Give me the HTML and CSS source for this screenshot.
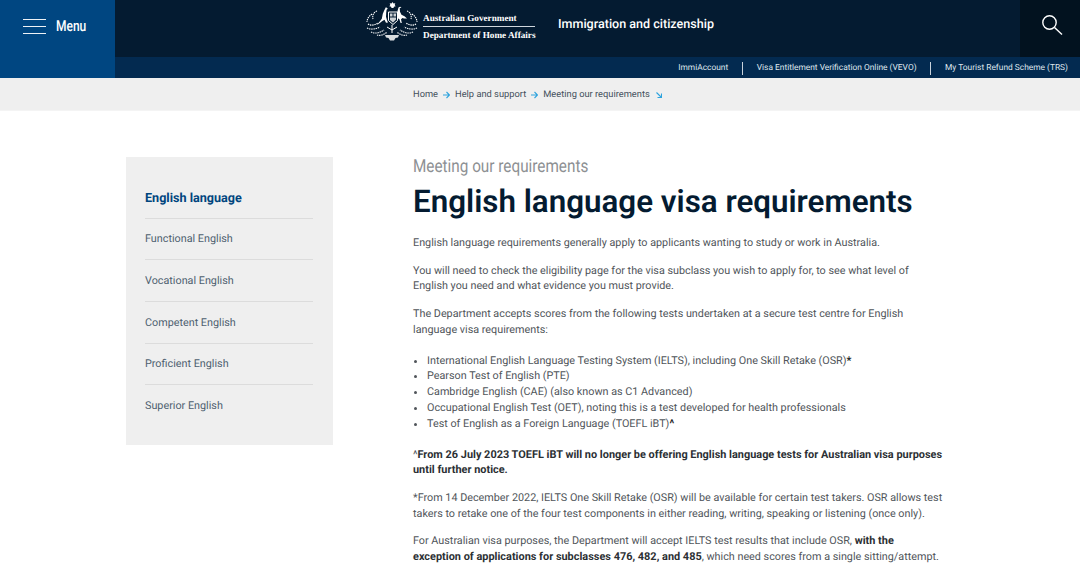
FILE: index.html
```html
<!DOCTYPE html>
<html lang="en">
<head>
<meta charset="utf-8">
<title>English language visa requirements</title>
<link rel="stylesheet" href="styles.css">
</head>
<body>
<header class="header">
  <a class="menu-btn">
    <svg class="burger" width="23" height="16" viewBox="0 0 23 16"><path d="M0 .5h23M0 7.500h23M0 14.500h23" stroke="#eef2f6" stroke-width="1.100" fill="none"/></svg>
    <span class="menu-label">Menu</span>
  </a>
  <div class="header-main">
    <div class="header-top">
      <div class="brand">
        <svg class="crest" width="54" height="42" viewBox="0 0 54 42">
          <path fill="#fff" d="M27.500 2l1 1.600 1.800-.3-.6 1.700 1 1.300-1.800.4-.4 1.300h-2l-.4-1.300-1.800-.4 1-1.300-.6-1.700 1.800.3z"/>
          <path fill="#fff" d="M21 7l1 1.200 1 .3-1.400 1.200-.4 3-.2 4 1 3.500 1 2.300-2 .3-1.500-3-2.500 1.500-3.500 2.800-1.500.6 2.500-3 2.300-3 1-5 1.500-3.500z"/>
          <path fill="#fff" d="M33.500 7.500l1.500-.8 1.500.5-1.800 1 .3 3.500 1.500 3 3 1.500 2.500 2.200-3 .2-1.500-.6-1.500 1.200.8 3.800h-1.200l-1.200-3.800-2-1.300-.6-4.400z"/>
          <path fill="none" stroke="#fff" stroke-width="1" d="M23.500 12h9v8.500l-4.500 4-4.500-4z"/>
          <path fill="#fff" opacity=".8" d="M25 13.500h2.500v3H25zM28.500 13.500H31v3h-2.500zM25 17.500h6v2l-3 3-3-2.500z"/>
          <path fill="none" stroke="#fff" stroke-width="1.100" stroke-dasharray="1.400 .8" d="M12 11c-3 1-5 4-4 8M7 14c-3 2-5 5-5 8M3 24c3 2 7 1 10-1M2 28c4 2 9 1 13-1M6 32c4 2 9 1 13-2M12 35c3 1 7 0 10-3M42 11c3 1 5 4 4 8M47 14c3 2 5 5 5 8M51 24c-3 2-7 1-10-1M52 28c-4 2-9 1-13-1M48 32c-4 2-9 1-13-2M42 35c-3 1-7 0-10-3"/>
          <path fill="none" stroke="#fff" stroke-width="1" d="M22 27l5 3 5-3M27 25v8"/>
          <path fill="#fff" opacity=".85" d="M20 35h14l-1 2.500-2.500.5-1.500 2.500h-4l-1.500-2.500-2.500-.5z"/>
        </svg>
        <div class="gov">
          <span class="gov-line gov-first">Australian Government</span>
          <span class="gov-line">Department of Home Affairs</span>
        </div>
        <div class="site-title">Immigration and citizenship</div>
      </div>
      <a class="search-btn">
        <svg width="21" height="20" viewBox="0 0 21 20"><circle cx="7.500" cy="7.500" r="6.700" fill="none" stroke="#fff" stroke-width="1.400"/><path d="M12.500 12.500l7.500 7" stroke="#fff" stroke-width="1.400" fill="none"/></svg>
      </a>
    </div>
    <nav class="header-links">
      <a class="hlink">ImmiAccount</a>
      <a class="hlink">Visa Entitlement Verification Online (VEVO)</a>
      <a class="hlink">My Tourist Refund Scheme (TRS)</a>
    </nav>
  </div>
</header>
<nav class="crumbs">
  <a>Home</a>
  <svg class="crumb-arrow" width="7" height="8" viewBox="0 0 7 8"><path d="M0 4h6M3.500 1l3 3-3 3" stroke="#2ea3dd" stroke-width="1.100" fill="none"/></svg>
  <a>Help and support</a>
  <svg class="crumb-arrow" width="7" height="8" viewBox="0 0 7 8"><path d="M0 4h6M3.500 1l3 3-3 3" stroke="#2ea3dd" stroke-width="1.100" fill="none"/></svg>
  <a>Meeting our requirements</a>
  <svg class="crumb-down" width="6" height="6" viewBox="0 0 6 6"><path d="M.5.500l5 5M5.500 1.500v4h-4" stroke="#2ea3dd" stroke-width="1.100" fill="none"/></svg>
</nav>
<main class="page">
  <aside class="side">
    <a class="side-item side-active">English language</a>
    <a class="side-item">Functional English</a>
    <a class="side-item">Vocational English</a>
    <a class="side-item">Competent English</a>
    <a class="side-item">Proficient English</a>
    <a class="side-item side-last">Superior English</a>
  </aside>
  <article class="content">
    <div class="eyebrow">Meeting our requirements</div>
    <h1 class="title">English language visa requirements</h1>
    <p>English language requirements generally apply to applicants wanting to study or work in Australia.</p>
    <p>You will need to check the eligibility page for the visa subclass you wish to apply for, to see what level of English you need and what evidence you must provide.</p>
    <p>The Department accepts scores from the following tests undertaken at a secure test centre for English language visa requirements:</p>
    <ul class="tests">
      <li>International English Language Testing System (IELTS), including One Skill Retake (OSR)<b>*</b></li>
      <li>Pearson Test of English (PTE)</li>
      <li>Cambridge English (CAE) (also known as C1 Advanced)</li>
      <li>Occupational English Test (OET), noting this is a test developed for health professionals</li>
      <li>Test of English as a Foreign Language (TOEFL iBT)<b>^</b></li>
    </ul>
    <p><span>^</span><b>From 26 July 2023 TOEFL iBT will no longer be offering English language tests for Australian visa purposes until further notice.</b></p>
    <p>*From 14 December 2022, IELTS One Skill Retake (OSR) will be available for certain test takers. OSR allows test takers to retake one of the four test components in either reading, writing, speaking or listening (once only).</p>
    <p>For Australian visa purposes, the Department will accept IELTS test results that include OSR, <b>with the exception of applications for subclasses 476, 482, and 485</b>, which need scores from a single sitting/attempt.</p>
  </article>
</main>
</body>
</html>
```
FILE: styles.css
```css
* { box-sizing: border-box; }
html, body { margin: 0; padding: 0; height: 575px; overflow: hidden; background: #fff; }
body { font-family: Roboto, "Liberation Sans", sans-serif; color: #50555a; font-size: 10.800px; line-height: 15.800px; text-rendering: geometricPrecision; }

.header { display: flex; height: 78px; }
.menu-btn { width: 115px; background: #004681; display: flex; align-items: flex-start; padding: 19px 0 0 23px; color: #fff; }
.burger { flex: none; }
.menu-label { margin-left: 10px; font-size: 15px; line-height: 15px; font-weight: 500; transform: scaleX(.8); transform-origin: left; }
.header-main { flex: 1; display: flex; flex-direction: column; }
.header-top { height: 57px; background: #041b31; display: flex; justify-content: space-between; }
.brand { display: flex; align-items: flex-start; margin-left: 250px; }
.crest { flex: none; }
.gov { margin: 12px 0 0 4px; display: flex; flex-direction: column; font-family: "Liberation Serif", serif; font-weight: 700; color: #fff; font-size: 9.200px; line-height: 12px; width: 112px; }
.gov-line { white-space: nowrap; }
.gov-first { border-bottom: 1px solid #cfd6dd; padding-bottom: 2px; margin-bottom: 2px; }
.site-title { margin: 15px 0 0 23px; color: #fff; font-size: 12.550px; line-height: 20px; font-weight: 500; white-space: nowrap; }
.search-btn { width: 60px; background: #02121f; display: flex; justify-content: flex-start; padding: 15px 0 0 22px; }
.header-links { height: 21px; background: #032a50; display: flex; justify-content: flex-end; align-items: center; padding: 1px 12px 0 0; color: #dfe6ed; font-size: 8.400px; }
.hlink { line-height: 13px; padding: 0 13.500px 0 14px; border-left: 1px solid #c9d2db; white-space: nowrap; }
.hlink:first-child { border-left: 0; }
.hlink:last-child { padding-right: 0; }

.crumbs { height: 33px; background: #efefef; border-bottom: 1px solid #f4f4f4; display: flex; align-items: center; padding: 1px 0 0 413px; font-size: 9.300px; color: #44505c; }
.crumb-arrow { margin: 0 5px; }
.crumb-down { margin-left: 6px; }

.page { display: flex; align-items: flex-start; padding: 46px 0 0 126px; }
.side { width: 207px; height: 288px; background: #efefef; padding: 20px 20px 0 19px; flex: none; display: flex; flex-direction: column; font-size: 10.800px; color: #4e5f70; }
.side-item { height: 41.700px; border-bottom: 1px solid #dcdcdc; display: flex; align-items: center; }
.side-active { color: #00457e; font-weight: 700; font-size: 12.600px; padding-top: 3px; }
.side-last { border-bottom: 0; }

.content { width: 531px; margin-left: 80px; }
.eyebrow { font-size: 18px; line-height: 20px; color: #8d9093; transform: scaleX(.85); transform-origin: left; white-space: nowrap; }
.title { margin: 7px 0 15px; font-size: 31.350px; line-height: 36px; font-weight: 600; color: #041b31; white-space: nowrap; }
p { margin: 0 0 11.800px; }
p b { color: #2b2f33; font-size: 10.930px; }
.tests { margin: 15px 0 15px; padding: 0 0 0 14px; }
.tests b { color: #222; }
```
